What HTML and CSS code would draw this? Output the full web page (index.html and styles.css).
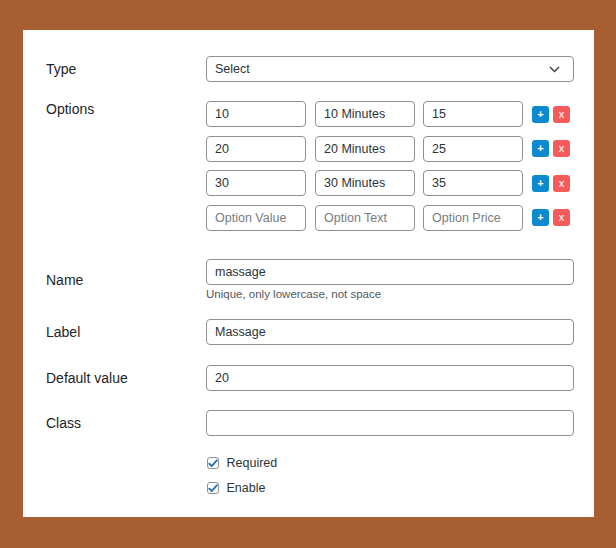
FILE: index.html
```html
<!DOCTYPE html>
<html>
<head>
<meta charset="utf-8">
<link rel="stylesheet" href="styles.css">
</head>
<body>
<div class="card">
  <div class="row row-type">
    <div class="lbl">Type</div>
    <div class="field">
      <div class="select">
        <span>Select</span>
        <svg class="chev" width="11" height="7" viewBox="0 0 11 7"><path d="M1 1l4.5 4.5L10 1" fill="none" stroke="#3c434a" stroke-width="1.5"/></svg>
      </div>
    </div>
  </div>

  <div class="row row-options">
    <div class="lbl lbl-top">Options</div>
    <div class="field options">
      <div class="opt">
        <div class="input w100">10</div>
        <div class="input w100">10 Minutes</div>
        <div class="input w100">15</div>
        <div class="btns"><span class="btn add">+</span><span class="btn del">x</span></div>
      </div>
      <div class="opt">
        <div class="input w100">20</div>
        <div class="input w100">20 Minutes</div>
        <div class="input w100">25</div>
        <div class="btns"><span class="btn add">+</span><span class="btn del">x</span></div>
      </div>
      <div class="opt">
        <div class="input w100">30</div>
        <div class="input w100">30 Minutes</div>
        <div class="input w100">35</div>
        <div class="btns"><span class="btn add">+</span><span class="btn del">x</span></div>
      </div>
      <div class="opt">
        <div class="input w100 ph">Option Value</div>
        <div class="input w100 ph">Option Text</div>
        <div class="input w100 ph">Option Price</div>
        <div class="btns"><span class="btn add">+</span><span class="btn del">x</span></div>
      </div>
    </div>
  </div>

  <div class="row row-name">
    <div class="lbl">Name</div>
    <div class="field">
      <div class="input">massage</div>
      <div class="help">Unique, only lowercase, not space</div>
    </div>
  </div>

  <div class="row row-label">
    <div class="lbl">Label</div>
    <div class="field"><div class="input">Massage</div></div>
  </div>

  <div class="row row-default">
    <div class="lbl">Default value</div>
    <div class="field"><div class="input">20</div></div>
  </div>

  <div class="row row-class">
    <div class="lbl">Class</div>
    <div class="field"><div class="input"></div></div>
  </div>

  <div class="checks">
    <label class="check"><span class="box"><svg width="10" height="9" viewBox="0 0 10 9"><path d="M1.2 4.6l2.5 2.6L8.8 1.3" fill="none" stroke="#2271b1" stroke-width="1.8" stroke-linecap="round" stroke-linejoin="round"/></svg></span>Required</label>
    <label class="check"><span class="box"><svg width="10" height="9" viewBox="0 0 10 9"><path d="M1.2 4.6l2.5 2.6L8.8 1.3" fill="none" stroke="#2271b1" stroke-width="1.8" stroke-linecap="round" stroke-linejoin="round"/></svg></span>Enable</label>
  </div>
</div>
</body>
</html>
```

FILE: styles.css
```css
* { box-sizing: border-box; }
html, body { margin: 0; padding: 0; }
body {
  background: #a75e33;
  width: 616px;
  height: 548px;
  overflow: hidden;
  font-family: "Liberation Sans", Arial, sans-serif;
  color: #1d2327;
}
.card {
  background: #fff;
  margin: 30px 0 0 23px;
  width: 571px;
  height: 487px;
  padding: 26px 20px 0 23px;
  display: flex;
  flex-direction: column;
}
.row {
  display: grid;
  grid-template-columns: 160px 368px;
  align-items: center;
}
.lbl {
  font-size: 14px;
  line-height: 16px;
  color: #1d2327;
}
.lbl-top { align-self: start; }
.row-options { margin-top: 19px; }
.row-name { margin-top: 28px; }
.row-label { margin-top: 18px; }
.row-default { margin-top: 20px; }
.row-class { margin-top: 19px; }

.input, .select {
  height: 26px;
  border: 1px solid #8c8f94;
  border-radius: 4px;
  padding: 0 8px;
  font-size: 12.5px;
  line-height: 24px;
  color: #2c3338;
  background: #fff;
  white-space: nowrap;
}
.select {
  display: flex;
  justify-content: space-between;
  align-items: center;
}
.chev { margin-right: 5px; }
.ph { color: #787c82; }

.options {
  display: flex;
  flex-direction: column;
  gap: 8.67px;
}
.opt {
  display: flex;
  align-items: center;
}
.w100 { width: 100px; }
.opt .input + .input { margin-left: 9px; }
.opt .input:nth-child(3) { margin-left: 8px; }
.btns {
  display: flex;
  gap: 4px;
  margin-left: 9px;
}
.btn {
  width: 17px;
  height: 17px;
  border-radius: 3px;
  color: #fff;
  font-size: 11px;
  line-height: 16px;
  text-align: center;
  font-weight: bold;
}
.add { background: #0b8ad0; }
.del { background: #f65b5b; font-weight: normal; }

.help {
  margin-top: 2px;
  font-size: 11.5px;
  line-height: 14px;
  color: #50575e;
}

.checks {
  margin-top: 15px;
  margin-left: 160px;
  display: flex;
  flex-direction: column;
}
.check {
  display: flex;
  align-items: center;
  height: 25px;
  font-size: 12.5px;
  color: #2c3338;
}
.box {
  width: 12px;
  height: 12px;
  border: 1px solid #8c8f94;
  border-radius: 3px;
  display: flex;
  align-items: center;
  justify-content: center;
  margin-right: 8px;
  margin-left: 0.5px;
}
.box svg { display: block; }
```
